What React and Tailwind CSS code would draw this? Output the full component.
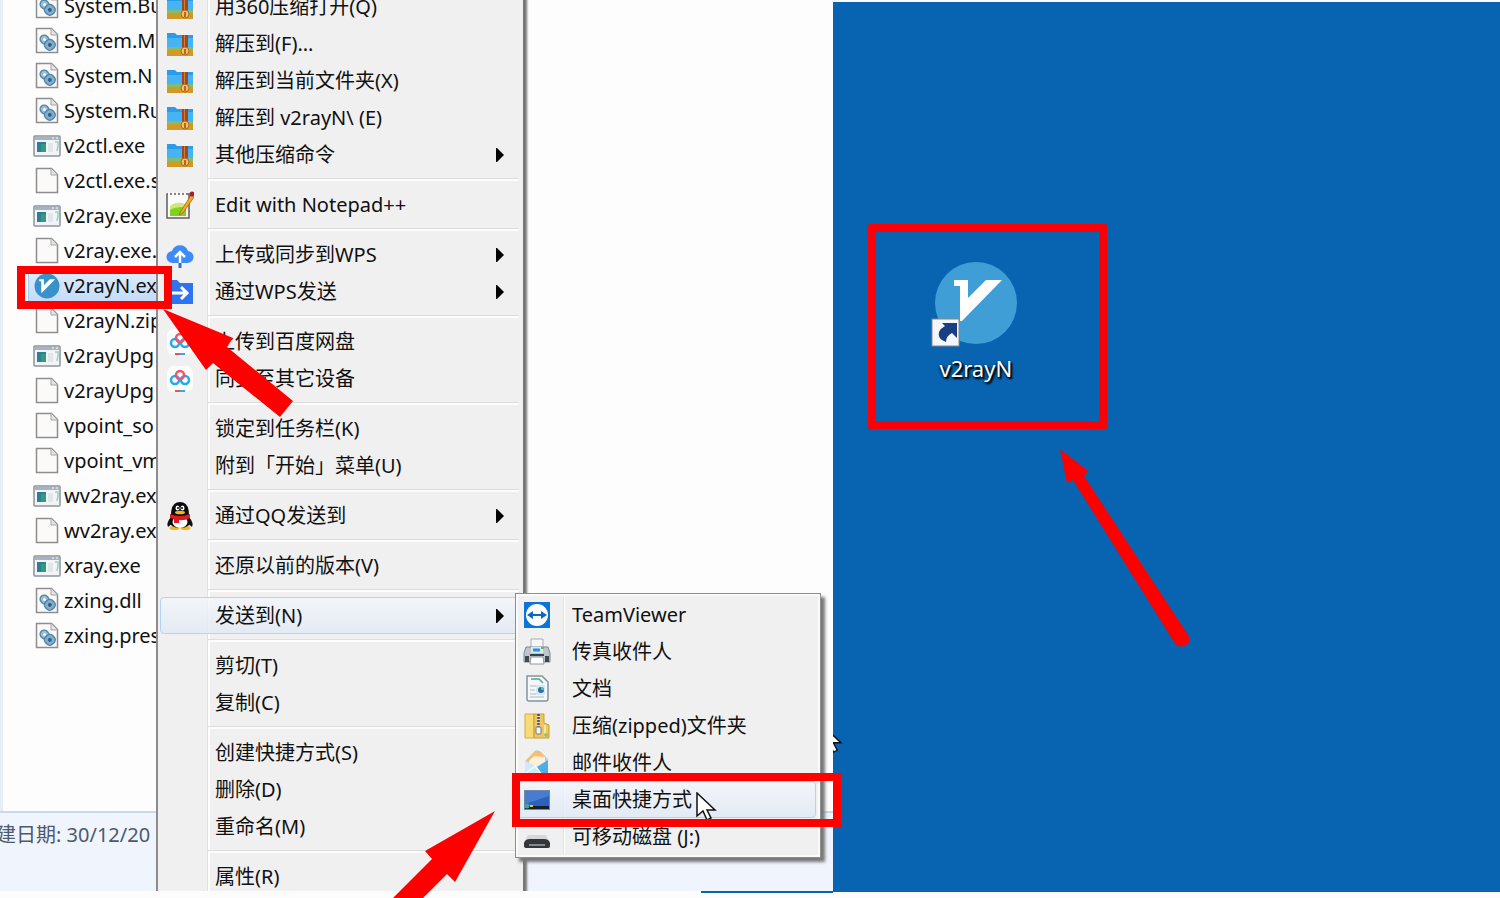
import clsx from "clsx";

const files = [
  { name: "System.Bu", icon: "dll" },
  { name: "System.M", icon: "dll" },
  { name: "System.N", icon: "dll" },
  { name: "System.Ru", icon: "dll" },
  { name: "v2ctl.exe", icon: "exe" },
  { name: "v2ctl.exe.s", icon: "file" },
  { name: "v2ray.exe", icon: "exe" },
  { name: "v2ray.exe.", icon: "file" },
  { name: "v2rayN.ex", icon: "v2ray", selected: true },
  { name: "v2rayN.zip", icon: "file" },
  { name: "v2rayUpg", icon: "exe" },
  { name: "v2rayUpg", icon: "file" },
  { name: "vpoint_so", icon: "file" },
  { name: "vpoint_vm", icon: "file" },
  { name: "wv2ray.ex", icon: "exe" },
  { name: "wv2ray.ex", icon: "file" },
  { name: "xray.exe", icon: "exe" },
  { name: "zxing.dll", icon: "dll" },
  { name: "zxing.pres", icon: "dll" },
];

const menuGroups = [
  [
    { label: "用360压缩打开(Q)", icon: "zip360" },
    { label: "解压到(F)...", icon: "zip360" },
    { label: "解压到当前文件夹(X)", icon: "zip360" },
    { label: "解压到 v2rayN\\ (E)", icon: "zip360" },
    { label: "其他压缩命令", icon: "zip360", sub: true },
  ],
  [{ label: "Edit with Notepad++", icon: "notepad" }],
  [
    { label: "上传或同步到WPS", icon: "wpsCloud", sub: true },
    { label: "通过WPS发送", icon: "wpsSend", sub: true },
  ],
  [
    { label: "上传到百度网盘", icon: "baidu" },
    { label: "同步至其它设备", icon: "baidu" },
  ],
  [{ label: "锁定到任务栏(K)" }, { label: "附到「开始」菜单(U)" }],
  [{ label: "通过QQ发送到", icon: "qq", sub: true }],
  [{ label: "还原以前的版本(V)" }],
  [{ label: "发送到(N)", sub: true, active: true }],
  [{ label: "剪切(T)" }, { label: "复制(C)" }],
  [{ label: "创建快捷方式(S)" }, { label: "删除(D)" }, { label: "重命名(M)" }],
  [{ label: "属性(R)" }],
];

const sendToItems = [
  { label: "TeamViewer", icon: "teamviewer" },
  { label: "传真收件人", icon: "fax" },
  { label: "文档", icon: "documents" },
  { label: "压缩(zipped)文件夹", icon: "zipped" },
  { label: "邮件收件人", icon: "mail" },
  { label: "桌面快捷方式", icon: "desktop", active: true },
  { label: "可移动磁盘 (J:)", icon: "disk" },
];

function Page() {
  return (
    <>
      <path d="M3.500 1.500h15l6 6v18h-21z" fill="#fbfaf8" stroke="#8e8e8e" strokeWidth="1.500" />
      <path d="M18 1.500v6.500h6.500" fill="#e4e4e4" stroke="#a5a5a5" />
    </>
  );
}

function V2rayMark() {
  return <path d="M19 19h14v18L51 19h16L27 60h-2V25h-6z" fill="#fff" />;
}

const icons = {
  file: <Page />,
  dll: (
    <>
      <Page />
      <g transform="rotate(45 14 15)">
        <rect x="6" y="11" width="9" height="8" rx="4" fill="#9dbfd6" stroke="#4f86ad" strokeWidth="1.500" />
        <rect x="13" y="10" width="10" height="10" rx="4" fill="#86aecb" stroke="#4f86ad" strokeWidth="1.500" />
        <circle cx="10.500" cy="15" r="1.500" fill="#f2f7fa" />
        <circle cx="18" cy="15" r="2" fill="#2f638b" />
      </g>
    </>
  ),
  exe: (
    <>
      <rect x="1" y="4" width="26" height="20" rx="1" fill="#f2f4f5" stroke="#8a929b" strokeWidth="1.500" />
      <path d="M2 5h24v3H2z" fill="#a7b3c2" />
      <path d="M19 6h2M23 6h2" stroke="#fff" />
      <rect x="4" y="10" width="9" height="10" fill="#2c7f96" />
      <path d="M8 12h5v8H8z" fill="#37a276" opacity=".8" />
      <path d="M15 11h5v9h-5z" fill="#e0e6e9" />
      <path d="M22 10h3v4l-1 5" fill="none" stroke="#9bd0c4" strokeWidth="1.500" />
    </>
  ),
  v2ray: (
    <>
      <circle cx="14" cy="14" r="12.500" fill="#3892c9" />
      <g transform="translate(0 1) scale(.33)">
        <V2rayMark />
      </g>
    </>
  ),
  zip360: (
    <>
      <path d="M1 3h8l2 2h16v21H1z" fill="#2d9be9" />
      <path d="M1 8h26v9H1z" fill="#45b4f5" />
      <path d="M1 17h26v3H1z" fill="#80bd72" />
      <path d="M1 20h26v5q0 1-1 1H2q-1 0-1-1z" fill="#cf9a26" />
      <path d="M16 5h6v15h-6z" fill="#9a4b21" />
      <path d="M18 5h1v14h-1z" fill="#d17a3b" />
      <circle cx="19" cy="21" r="4" fill="#f3c05b" stroke="#b5651f" />
      <path d="M19 19v5" stroke="#9a4b21" strokeWidth="1.500" />
    </>
  ),
  notepad: (
    <>
      <rect x="1" y="3" width="22" height="24" fill="#fbfbfb" stroke="#5d5d5d" strokeWidth="1.500" />
      <path d="M2 3h20" stroke="#fff" strokeWidth="3" strokeDasharray="2 2" />
      <path d="M4 15c4-4 10-4 16-2v12H4z" fill="#cfe77c" />
      <path d="M4 19c5-3 10-3 16-3v9H4z" fill="#7ed321" />
      <path d="M25 4L15 20l-2 4 4-2L28 6z" fill="#f5a91c" stroke="#a5641c" strokeWidth=".8" />
      <circle cx="26" cy="3" r="2.500" fill="#a81d35" />
    </>
  ),
  wpsCloud: (
    <>
      <path d="M7 22a6 6 0 0 1-1-12 8.500 8.500 0 0 1 16 0 6 6 0 0 1-1 12z" fill="#3c8bf8" />
      <path d="M14 23V12M9 16l5-5 5 5" fill="none" stroke="#fff" strokeWidth="2.500" />
      <path d="M14 22v5" stroke="#2d70cb" strokeWidth="3" />
    </>
  ),
  wpsSend: (
    <>
      <path d="M1 2h10l3 3h13v21H1z" fill="#2e73ef" />
      <path d="M5 15h16M15 9l6 6-6 6" fill="none" stroke="#fff" strokeWidth="3" />
    </>
  ),
  baidu: (
    <>
      <rect x="1" y="1" width="26" height="26" rx="7" fill="#fdfdfd" />
      <g fill="none" strokeWidth="2.500">
        <circle cx="9" cy="15" r="4" stroke="#22a9ef" />
        <circle cx="19" cy="15" r="4" stroke="#22a9ef" />
        <circle cx="14" cy="10" r="4" stroke="#e8566a" />
      </g>
      <path d="M9 26h5" stroke="#e55169" strokeWidth="2" />
      <path d="M14 26h5" stroke="#4aa0da" strokeWidth="2" />
    </>
  ),
  qq: (
    <>
      <path d="M5 15q-5 6-3 10l5-4M23 15q5 6 3 10l-5-4" fill="#111" />
      <ellipse cx="8.500" cy="26" rx="5" ry="2" fill="#f2b51c" />
      <ellipse cx="19.500" cy="26" rx="5" ry="2" fill="#f2b51c" />
      <path d="M5 13Q5 0 14 0t9 13q5 13-9 13T5 13z" fill="#0c0c0c" />
      <ellipse cx="14" cy="20" rx="7.500" ry="6" fill="#fff" />
      <ellipse cx="11.500" cy="6" rx="2" ry="2.500" fill="#fff" />
      <ellipse cx="16.500" cy="6" rx="2" ry="2.500" fill="#fff" />
      <circle cx="12" cy="6" r="1" />
      <circle cx="16" cy="6" r="1" />
      <ellipse cx="14" cy="10.500" rx="5" ry="1.800" fill="#f7b618" />
      <path d="M4 12q10 4 20 0v4q-6 3-11 2v3H8v-4l-4-1z" fill="#e01a22" />
    </>
  ),
  teamviewer: (
    <>
      <rect x="1" y="1" width="26" height="26" fill="#0b74d4" />
      <circle cx="14" cy="14" r="11" fill="#fff" />
      <path d="M4 14l6-4v3h8v-3l6 4-6 4v-3h-8v3z" fill="#0b68c4" />
    </>
  ),
  fax: (
    <>
      <path d="M8 1h12v9H8z" fill="#f5f8fb" stroke="#a8adb2" />
      <path d="M3 9h22l2 6v9H1v-9z" fill="#bfc5cb" stroke="#81878d" />
      <path d="M8 9h12v6H8z" fill="#d5e9f8" />
      <path d="M10 12h7" stroke="#1e95e9" strokeWidth="3" />
      <path d="M18 10h3" stroke="#4bc653" strokeWidth="2" />
      <path d="M2 18h4v6H2zM22 18h4v6h-4z" fill="#42474d" />
      <path d="M8 19h12l1 7H7z" fill="#fff" stroke="#92989d" />
      <path d="M7 17h14" stroke="#3d4146" strokeWidth="2" />
    </>
  ),
  documents: (
    <>
      <path d="M4 1h15l6 6v17q0 2-2 2H6q-2 0-2-2z" fill="#f4f7f8" stroke="#87939c" strokeWidth="1.500" />
      <path d="M8 4h8l4 4" fill="none" stroke="#55a394" strokeWidth="1.500" />
      <path d="M7 11h6M7 15h5M7 19h6M7 22h14" stroke="#adb7ce" />
      <path d="M13 10h9v10h-9z" fill="#d5e8f6" />
      <circle cx="18" cy="15" r="3" fill="#286fa8" />
      <path d="M18 15v-3a3 3 0 0 1 3 3z" fill="#69bd84" />
    </>
  ),
  zipped: (
    <>
      <path d="M2 2h9v24H2z" fill="#f6db77" stroke="#d4ad43" />
      <path d="M11 2h10v9l5 2v13H11z" fill="#edc75b" stroke="#c89d39" />
      <path d="M22 13v12" stroke="#fae7a0" strokeWidth="2" />
      <path d="M14 2h3v17h-3z" fill="#d9dbe0" />
      <path d="M15.500 2v15" stroke="#434e74" strokeWidth="2.500" strokeDasharray="2 1" />
      <rect x="13" y="15" width="5" height="7" rx="1" fill="#f1f3f6" stroke="#747b88" />
      <circle cx="23" cy="23" r="2" fill="#9bc26a" />
    </>
  ),
  mail: (
    <>
      <path d="M2 12L13 1l4 1 8 8v14l-5 3-18-2z" fill="#a9d6ee" />
      <path d="M3 12L12 2l6 1 6 8-9 5z" fill="#f8bd72" />
      <path d="M6 12l5-5 11 1v5l-9 5-7-3z" fill="#fff1d8" />
      <path d="M2 12l11 5 12-6v13l-5 3-18-2z" fill="#cdeaf9" />
      <path d="M25 11v13l-5 3-6-9z" fill="#4caee5" />
      <path d="M2 25l10-8 8 10" fill="none" stroke="#f2fbff" strokeWidth="1.500" />
    </>
  ),
  desktop: (
    <>
      <rect x="1" y="4" width="26" height="20" fill="#7289a5" />
      <rect x="2" y="5" width="24" height="18" fill="#2c62bd" />
      <path d="M2 5h24v5L2 18z" fill="#477cd0" />
      <path d="M2 20h24v3H2z" fill="#14202c" />
      <circle cx="4" cy="20" r="2.500" fill="#38a99b" />
      <path d="M7 20h3" stroke="#e2be4b" strokeWidth="2" />
    </>
  ),
  disk: (
    <>
      <path d="M5 12h18l4 8v4H1v-4z" fill="#d5d8db" />
      <path d="M1 20q1-4 6-4h14q5 0 6 4v3q0 2-2 2H3q-2 0-2-2z" fill="#34363a" />
      <path d="M6 22h16" stroke="#85898e" strokeWidth="2" />
    </>
  ),
};

function Icon({ name }) {
  return (
    <svg viewBox="0 0 28 28" className="h-7 w-7 shrink-0" aria-hidden="true">
      {icons[name]}
    </svg>
  );
}

function MenuItem({ item }) {
  return (
    <button
      role="menuitem"
      className={clsx(
        "flex h-[37px] w-full items-center rounded-sm border text-left whitespace-nowrap",
        item.active
          ? "border-[#b3d3f5] bg-linear-to-b from-[#f3f6fb]/80 to-[#e1e9f5]/80"
          : "border-transparent"
      )}
    >
      <span className="flex w-[54px] shrink-0 pl-[5px]">{item.icon && <Icon name={item.icon} />}</span>
      <span className="flex-1">{item.label}</span>
      {item.sub && (
        <svg viewBox="0 0 8 14" className="mr-3.5 h-3.5 w-2" aria-hidden="true">
          <path d="M0 0h1l7 7-7 7H0z" fill="#000" />
        </svg>
      )}
    </button>
  );
}

function FileList() {
  return (
    <ul className="-mt-3 pl-5">
      {files.map((file, i) => (
        <li key={i} className="flex h-[35px] w-[136px] items-center whitespace-nowrap">
          <span
            className={clsx(
              "ml-[5px] flex h-8 flex-1 items-center gap-[3px] border pl-1",
              file.selected
                ? "border-[#a5c8ef] bg-linear-to-b from-[#dfecfc] to-[#c3dcfa]"
                : "border-transparent"
            )}
          >
            <Icon name={file.icon} />
            {file.name}
          </span>
        </li>
      ))}
    </ul>
  );
}

function ContextMenu() {
  return (
    <div
      role="menu"
      className="absolute -top-3 left-[156px] w-[367px] border-l-2 border-[#8c8c8c] bg-[#f0f0f0] bg-[linear-gradient(to_right,transparent_49px,#e0e1e1_49px,#e0e1e1_50px,#fff_50px,#fff_52px,transparent_52px)] pr-1 pl-0.5 shadow-[4px_0_2px_#777]"
    >
      {menuGroups.map((group, i) => (
        <div key={i}>
          {i > 0 && (
            <div className="flex h-[13px] items-center pl-12">
              <hr className="h-[3px] flex-1 border-t border-b-2 border-t-[#dcdcdc] border-b-white/80" />
            </div>
          )}
          {group.map((item) => (
            <MenuItem key={item.label} item={item} />
          ))}
        </div>
      ))}
    </div>
  );
}

function SendToMenu() {
  return (
    <div
      role="menu"
      className="absolute top-[593px] left-[515px] w-[306px] border border-[#8e8e8e] bg-[#f0f0f0] bg-[linear-gradient(to_right,transparent_47px,#e0e1e1_47px,#e0e1e1_48px,#fff_48px,#fff_49px,transparent_49px)] py-0.5 pr-1 pl-px shadow-[inset_0_0_0_2px_#fafafa,4px_4px_3px_#777]"
    >
      {sendToItems.map((item) => (
        <MenuItem key={item.label} item={item} />
      ))}
    </div>
  );
}

function Explorer() {
  return (
    <div className="relative flex flex-1 flex-col overflow-hidden">
      <div className="flex-1 border-l-3 border-[#e4eef7] bg-[#fdfdfd]">
        <FileList />
      </div>
      <div className="h-20 border-t-2 border-[#c9d9ec] bg-[#f0f4fc] pt-2 whitespace-nowrap text-[#4c5a6d]">
        <span className="-ml-1">建日期: 30/12/20</span>
      </div>
      <ContextMenu />
      <SendToMenu />
    </div>
  );
}

function Cursor({ className }) {
  return (
    <svg viewBox="0 0 21 30" className={className} aria-hidden="true">
      <path d="M1 1v23l6-5 4 9 4-2-4-8h8z" fill="#fff" stroke="#111" strokeWidth="1.500" />
    </svg>
  );
}

function Desktop() {
  return (
    <section className="relative mt-0.5 flex-1 overflow-hidden bg-[#0864b1]">
      <Cursor className="absolute top-[724px] -left-2.5 h-7 w-5" />
      <div className="absolute top-[222px] left-[35px] flex h-[205px] w-[239px] justify-center rounded-xs border-8 border-[#fb0007] pt-7 pr-6">
        <a href="#v2rayN" className="flex flex-col items-center text-white">
          <svg viewBox="-4 0 92 88" className="h-[88px] w-[92px]" aria-hidden="true">
            <circle cx="42" cy="43" r="41" fill="#409ed7" />
            <g transform="translate(1 1)">
              <V2rayMark />
            </g>
            <rect x="-2" y="59" width="27" height="27" fill="#f3f7fc" stroke="#8e8480" />
            <path d="M8 63h15v15l-5-5q-6 3-6 9-9-3-7-10 2-4 6-6z" fill="#173f82" />
          </svg>
          <span className="text-[22px] leading-10 [text-shadow:2px_2px_2px_#000,0_1px_3px_#000]">v2rayN</span>
        </a>
      </div>
      <svg viewBox="0 0 140 210" className="absolute top-[438px] left-[217px] h-[210px] w-[140px]" aria-hidden="true">
        <path d="M10 9L38 31l-4 5L138 195q4 8-4 11-6 2-10-4L23 40l-6 3z" fill="#fe0000" />
      </svg>
    </section>
  );
}

// red boxes and arrows that point out the steps
function Annotations() {
  return (
    <>
      <div className="absolute top-[266px] left-[17px] h-[43px] w-[155px] border-8 border-[#fe0000]" />
      <svg viewBox="0 0 140 115" className="absolute top-[306px] left-[160px] h-[115px] w-[140px]" aria-hidden="true">
        <path d="M3 3l70 29-6 9 66 54-13 16-67-54-7 7z" fill="#fe0000" />
      </svg>
      <Cursor className="absolute top-[792px] left-[696px] h-[30px] w-[21px]" />
      <div className="absolute top-[773px] left-[512px] h-[54px] w-[329px] border-8 border-[#fe0000]" />
      <svg viewBox="0 0 110 90" className="absolute top-[808px] left-[388px] h-[90px] w-[110px]" aria-hidden="true">
        <path d="M107 3L67 74l-8-8-24 24H5l39-39-7-8z" fill="#fe0000" />
      </svg>
    </>
  );
}

export default function App() {
  return (
    <main className="flex min-h-screen overflow-hidden bg-[#fcfcfc] font-['Noto_Sans','Noto_Sans_CJK_SC',sans-serif] text-xl text-[#111]">
      <section className="relative z-10 flex w-5/9 shrink-0 flex-col">
        <Explorer />
        <div className="flex h-[7px] justify-end">
          <hr className="w-[132px] border-t-2 border-[#0864b1]" />
        </div>
        <Annotations />
      </section>
      <div className="flex flex-1 flex-col pb-[6px]">
        <Desktop />
      </div>
    </main>
  );
}
